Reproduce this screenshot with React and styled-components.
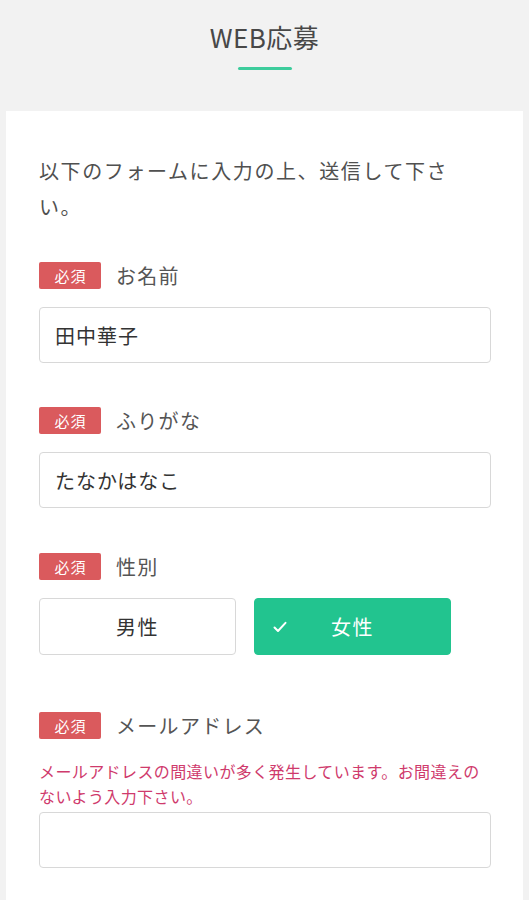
import React from "react";
import styled, { createGlobalStyle } from "styled-components";

const GlobalStyle = createGlobalStyle`
  * { box-sizing: border-box; }
  html, body { margin: 0; padding: 0; background: #f2f2f2; }
  body {
    font-family: "Noto Sans CJK JP", "Noto Sans", sans-serif;
    color: #444;
  }
`;

const Page = styled.div`
  background: #f2f2f2;
  padding: 0 6px;
`;

const Header = styled.header`
  display: flex;
  flex-direction: column;
  align-items: center;
  padding: 20px 0 41px;
`;

const Title = styled.h1`
  margin: 0;
  font-size: 26px;
  line-height: 34px;
  font-weight: 400;
  color: #484848;
  letter-spacing: 0.5px;
`;

const Underline = styled.span`
  display: block;
  width: 54px;
  height: 3px;
  margin-top: 13px;
  background: #3dcc9c;
  border-radius: 2px;
`;

const Card = styled.main`
  background: #fff;
  padding: 42px 32px 22px 33px;
  min-height: 789px;
`;

const Intro = styled.p`
  margin: 0 0 37px;
  font-size: 20px;
  line-height: 36px;
  letter-spacing: 1.6px;
  color: #505050;
`;

const Field = styled.div`
  margin-bottom: ${(p) => p.$gap || 44}px;
  &:last-child { margin-bottom: 0; }
`;

const LabelRow = styled.div`
  display: flex;
  align-items: center;
  gap: 15px;
  height: 27px;
`;

const Badge = styled.span`
  display: inline-flex;
  align-items: center;
  justify-content: center;
  width: 62px;
  height: 27px;
  background: #da5a5d;
  color: #fff;
  font-size: 15px;
  border-radius: 2px;
  letter-spacing: 1px;
  padding-left: 1px;
`;

const LabelText = styled.span`
  font-size: 20px;
  letter-spacing: 1.3px;
  color: #555;
`;

const Note = styled.p`
  margin: 20px 0 3px;
  font-size: 16px;
  line-height: 25px;
  letter-spacing: 0.4px;
  color: #cf3a6c;
`;

const Input = styled.input`
  display: block;
  width: 100%;
  height: 56px;
  margin-top: ${(p) => (p.$tight ? 0 : 18)}px;
  padding: 0 15px;
  border: 1px solid #d8d8d8;
  border-radius: 4px;
  background: #fff;
  font-family: inherit;
  font-size: 20px;
  letter-spacing: 1px;
  color: #333;
  outline: none;
`;

const Choices = styled.div`
  display: flex;
  gap: 18px;
  margin-top: 18px;
`;

const Choice = styled.button`
  position: relative;
  width: 197px;
  height: 57px;
  border-radius: 4px;
  border: 1px solid ${(p) => (p.$selected ? "#22c48f" : "#d8d8d8")};
  background: ${(p) => (p.$selected ? "#22c48f" : "#fff")};
  color: ${(p) => (p.$selected ? "#fff" : "#333")};
  font-family: inherit;
  font-size: 20px;
  letter-spacing: 1.5px;
  cursor: pointer;
  display: flex;
  align-items: center;
  justify-content: center;
  padding: 0;
`;

const Check = styled.svg`
  position: absolute;
  left: 18px;
  top: 50%;
  transform: translateY(-50%);
`;

function CheckMark() {
  return (
    <Check width="14" height="12" viewBox="0 0 14 12" fill="none">
      <path d="M1.5 6.5 L5 10 L12.5 1.8" stroke="#fff" strokeWidth="2" strokeLinecap="round" strokeLinejoin="round" />
    </Check>
  );
}

export default function App() {
  return (
    <>
      <GlobalStyle />
      <Page>
        <Header>
          <Title>WEB応募</Title>
          <Underline />
        </Header>
        <Card>
          <Intro>以下のフォームに入力の上、送信して下さい。</Intro>

          <Field>
            <LabelRow>
              <Badge>必須</Badge>
              <LabelText>お名前</LabelText>
            </LabelRow>
            <Input defaultValue="田中華子" />
          </Field>

          <Field $gap={45}>
            <LabelRow>
              <Badge>必須</Badge>
              <LabelText>ふりがな</LabelText>
            </LabelRow>
            <Input defaultValue="たなかはなこ" />
          </Field>

          <Field $gap={57}>
            <LabelRow>
              <Badge>必須</Badge>
              <LabelText>性別</LabelText>
            </LabelRow>
            <Choices>
              <Choice type="button">男性</Choice>
              <Choice type="button" $selected>
                <CheckMark />
                女性
              </Choice>
            </Choices>
          </Field>

          <Field>
            <LabelRow>
              <Badge>必須</Badge>
              <LabelText>メールアドレス</LabelText>
            </LabelRow>
            <Note>メールアドレスの間違いが多く発生しています。お間違えのないよう入力下さい。</Note>
            <Input $tight />
          </Field>
        </Card>
      </Page>
    </>
  );
}
